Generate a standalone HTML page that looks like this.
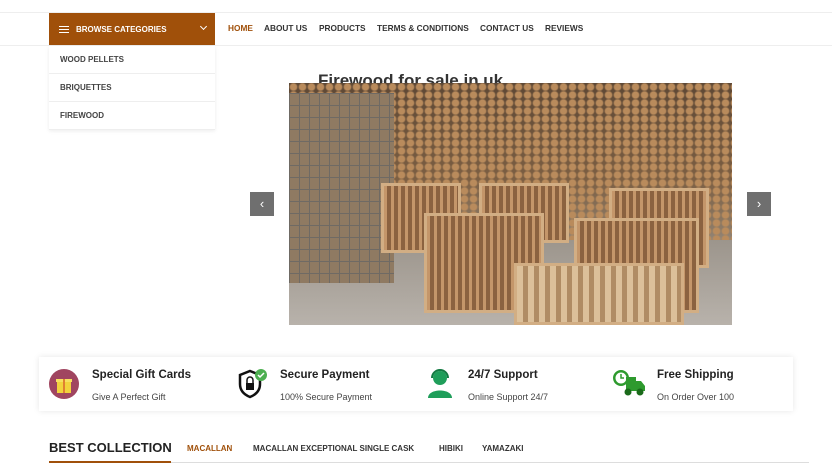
<!DOCTYPE html>
<html><head><meta charset="utf-8"><style>
*{margin:0;padding:0;box-sizing:border-box}
body{width:832px;height:468px;overflow:hidden;background:#fff;font-family:"Liberation Sans",sans-serif;position:relative;color:#333}
.topline{position:absolute;top:12px;left:0;right:0;border-top:1px solid #eee}
.navline{position:absolute;top:45px;left:0;right:0;border-top:1px solid #eee}
.browse{position:absolute;left:49px;top:13px;width:166px;height:32px;background:#a0500a;color:#fff;font-size:8px;font-weight:bold;display:flex;align-items:center;padding-left:10px}
.browse .hb{width:10px;height:7px;border-top:1px solid #fff;border-bottom:1px solid #fff;position:relative;margin-right:7px}
.browse .hb:after{content:"";position:absolute;left:0;right:0;top:2px;border-top:1px solid #fff}
.browse .chev{position:absolute;right:9px;top:11px;width:5px;height:5px;border-right:1px solid #fff;border-bottom:1px solid #fff;transform:rotate(45deg)}
.nav span{position:absolute;top:23px;font-size:8.3px;font-weight:bold;color:#333;white-space:nowrap}
.cats{position:absolute;left:49px;top:46px;width:166px;box-shadow:0 1px 4px rgba(0,0,0,.08)}
.cats div{height:28px;border-bottom:1px solid #eee;font-size:8px;font-weight:bold;color:#444;padding-left:11px;line-height:27px}
.title{position:absolute;left:318px;top:71px;font-size:17px;font-weight:bold;color:#333}
.photo{position:absolute;left:289px;top:83px;width:443px;height:242px;overflow:hidden;
background:
radial-gradient(circle at 50% 50%,#b98b5c 0 3px,transparent 4.5px) 0 0/9px 8px,
linear-gradient(#5e4835,#7c5f43 40%,#8c7a66 60%,#a39d97 75%,#b3aea8)}
.floor{position:absolute;left:0;right:0;bottom:0;height:85px;background:linear-gradient(#9c958c,#b8b2ab)}
.cage{position:absolute;left:0;top:10px;width:105px;height:190px;background:repeating-linear-gradient(90deg,#6f6a64 0 1px,transparent 1px 10px),repeating-linear-gradient(#6f6a64 0 1px,#8f7a62 1px 12px)}
.crate{position:absolute;background:repeating-linear-gradient(90deg,#c4966a 0 3px,#8b6240 3px 7px);border:3px solid #d2ae84}
.arr{position:absolute;top:192px;width:24px;height:24px;background:#6f6f6f;color:#fff;font-size:13px;text-align:center;line-height:23px}
.feat{position:absolute;left:39px;top:357px;width:754px;height:54px;box-shadow:0 0 6px rgba(0,0,0,.1);background:#fff}
.f{position:absolute;top:0}
.f b{position:absolute;top:12px;font-size:11.5px;color:#222;white-space:nowrap}
.f i{position:absolute;top:35px;font-style:normal;font-size:9px;color:#444;white-space:nowrap}
.best{position:absolute;left:49px;top:440px;font-size:13px;font-weight:bold;color:#222}
.bline{position:absolute;left:49px;top:462px;width:760px;border-top:1px solid #ddd}
.bline2{position:absolute;left:49px;top:461px;width:122px;border-top:2px solid #a0500a}
.tabs span{position:absolute;top:444px;font-size:8px;font-weight:bold;color:#333;white-space:nowrap}
</style></head><body>
<div class="topline"></div><div class="navline"></div>
<div class="browse"><div class="hb"></div>BROWSE CATEGORIES<div class="chev"></div></div>
<div class="nav"><span style="left:228px;color:#a0500a">HOME</span><span style="left:264px">ABOUT US</span><span style="left:319px">PRODUCTS</span><span style="left:377px">TERMS &amp; CONDITIONS</span><span style="left:480px">CONTACT US</span><span style="left:545px">REVIEWS</span></div>
<div class="cats"><div>WOOD PELLETS</div><div>BRIQUETTES</div><div>FIREWOOD</div></div>
<div class="title">Firewood for sale in uk</div>
<div class="photo">
<div class="floor"></div>
<div class="cage"></div>
<div class="crate" style="left:92px;top:100px;width:80px;height:70px"></div>
<div class="crate" style="left:190px;top:100px;width:90px;height:60px"></div>
<div class="crate" style="left:320px;top:105px;width:100px;height:80px"></div>
<div class="crate" style="left:135px;top:130px;width:120px;height:100px"></div>
<div class="crate" style="left:285px;top:135px;width:125px;height:95px"></div>
<div class="crate" style="left:225px;top:180px;width:170px;height:62px;background:repeating-linear-gradient(90deg,#dcc09a 0 6px,#b08c64 6px 11px)"></div>
</div>
<div class="arr" style="left:250px">‹</div><div class="arr" style="left:747px">›</div>
<div class="feat">
<div class="f" style="left:0"><svg style="position:absolute;left:10px;top:12px" width="30" height="30"><circle cx="15" cy="15" r="15" fill="#a04560"/><rect x="8" y="12" width="14" height="12" fill="#f2d23c"/><rect x="7" y="10" width="16" height="3" fill="#f6e060"/><rect x="14" y="10" width="2" height="14" fill="#e08030"/></svg><b style="left:53px">Special Gift Cards</b><i style="left:53px">Give A Perfect Gift</i></div>
<div class="f" style="left:188px"><svg style="position:absolute;left:9px;top:11px" width="32" height="32"><path d="M14 3 L24 7 V16 C24 23 19 27 14 29 C9 27 4 23 4 16 V7 Z" fill="none" stroke="#111" stroke-width="2.5"/><rect x="10" y="15" width="8" height="7" fill="#111"/><path d="M11 15 V12 a3 3 0 0 1 6 0 V15" fill="none" stroke="#111" stroke-width="1.5"/><circle cx="25" cy="7" r="6" fill="#4caf50"/><path d="M22 7 l2 2 l4-4" stroke="#fff" stroke-width="1.5" fill="none"/></svg><b style="left:53px">Secure Payment</b><i style="left:53px">100% Secure Payment</i></div>
<div class="f" style="left:377px"><svg style="position:absolute;left:10px;top:11px" width="30" height="32"><circle cx="14" cy="10" r="7" fill="#1f9e5a"/><path d="M6 10 a8 8 0 0 1 16 0" fill="none" stroke="#137a42" stroke-width="2"/><path d="M2 30 C2 20 26 20 26 30 Z" fill="#1f9e5a"/></svg><b style="left:52px">24/7 Support</b><i style="left:52px">Online Support 24/7</i></div>
<div class="f" style="left:566px"><svg style="position:absolute;left:7px;top:12px" width="34" height="28"><circle cx="9" cy="9" r="8" fill="#2e9a2e"/><circle cx="9" cy="9" r="5.5" fill="#fff"/><path d="M9 5 V9 H12" stroke="#2e9a2e" stroke-width="1.5" fill="none"/><path d="M14 8 H24 V22 H14 Z M24 12 H29 L33 17 V22 H24Z" fill="#2e9a2e"/><circle cx="16" cy="23" r="3.5" fill="#1a6a1a"/><circle cx="28" cy="23" r="3.5" fill="#1a6a1a"/></svg><b style="left:52px">Free Shipping</b><i style="left:52px">On Order Over 100</i></div>
</div>
<div class="best">BEST COLLECTION</div>
<div class="tabs"><span style="left:187px;color:#a0500a">MACALLAN</span><span style="left:253px">MACALLAN EXCEPTIONAL SINGLE CASK</span><span style="left:439px">HIBIKI</span><span style="left:482px">YAMAZAKI</span></div>
<div class="bline"></div><div class="bline2"></div>
</body></html>
